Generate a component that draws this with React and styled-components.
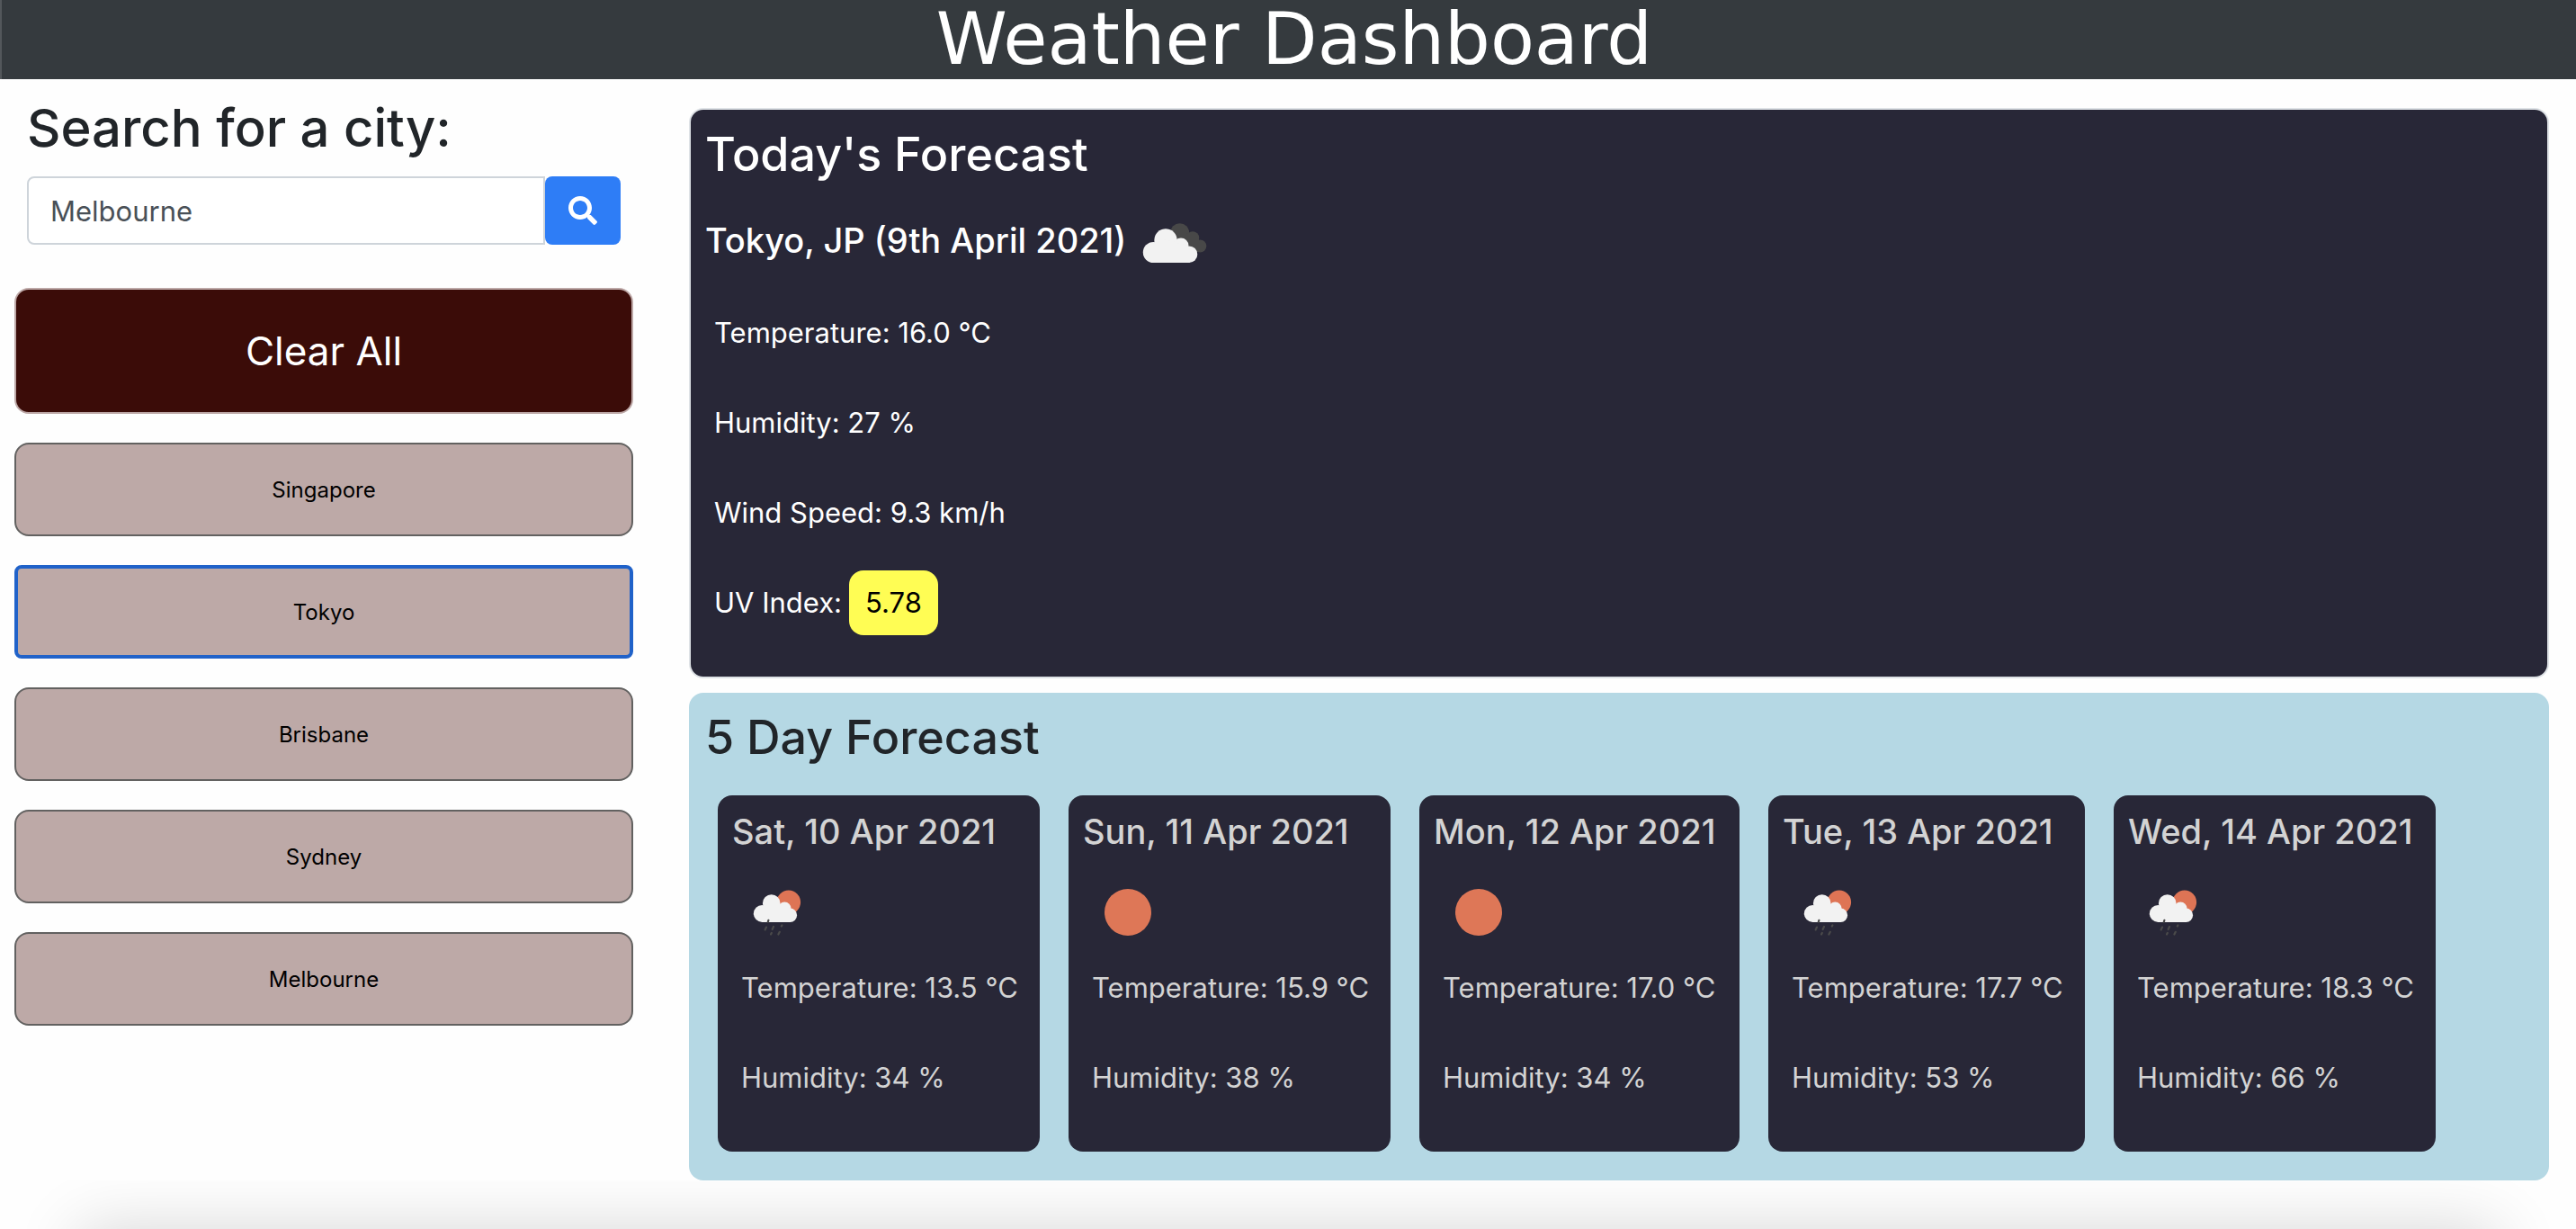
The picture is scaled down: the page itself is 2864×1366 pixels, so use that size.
import React, { useState } from "react";
import styled, { createGlobalStyle } from "styled-components";
import { FaSearch } from "react-icons/fa";

const GlobalStyle = createGlobalStyle`
  *, *::before, *::after { box-sizing: border-box; }
  body {
    margin: 0;
    background: #fefefe;
    color: #212529;
    font-family: Inter, "Liberation Sans", sans-serif;
  }
  button, input { font-family: inherit; }
`;

const Page = styled.div`
  display: flex;
  flex-direction: column;
  min-height: 100vh;
`;

const Header = styled.header`
  height: 88px;
  padding-left: 12px;
  background: #353a3e;
  border-left: 2px solid #53575b;
`;

const SiteTitle = styled.h1`
  margin: 0;
  color: #ffffff;
  font-family: Verdana, "DejaVu Sans", sans-serif;
  font-size: 80px;
  font-weight: 400;
  line-height: 88px;
  text-align: center;
`;

const Columns = styled.div`
  display: grid;
  grid-template-columns: minmax(0, 1fr) minmax(0, 3fr);
  flex: 1;
`;

const Sidebar = styled.aside`
  padding: 16px 12px 0 16px;
`;

const SearchForm = styled.form`
  padding: 0 14px;
`;

const SearchLabel = styled.label`
  display: block;
  margin-bottom: 16px;
  font-size: 58px;
  font-weight: 500;
  line-height: 76px;
`;

const SearchGroup = styled.div`
  display: flex;
  height: 76px;
`;

const SearchInput = styled.input`
  flex: 1;
  min-width: 0;
  padding: 0 24px;
  border: 2px solid #ced4da;
  border-radius: 8px 0 0 8px;
  background: #ffffff;
  color: #495057;
  font-size: 31px;
  outline: none;
`;

const SearchButton = styled.button`
  display: flex;
  align-items: center;
  justify-content: center;
  width: 84px;
  border: 0;
  border-radius: 8px;
  background: #2e7df6;
  color: #ffffff;
  font-size: 32px;
`;

const CityList = styled.div`
  display: flex;
  flex-direction: column;
  gap: 32px;
  margin-top: 48px;
`;

const ClearButton = styled.button`
  height: 140px;
  border: 2px solid #bda8a7;
  border-radius: 16px;
  background: #3b0c08;
  color: #ffffff;
  font-size: 44px;
`;

const CityButton = styled.button`
  height: 104px;
  border: ${(p) => (p.$active ? "4px solid #2062c9" : "2px solid #626160")};
  border-radius: ${(p) => (p.$active ? "8px" : "16px")};
  background: #bda9a7;
  color: #000000;
  font-size: 24px;
`;

const Content = styled.main`
  display: flex;
  flex-direction: column;
  gap: 16px;
  padding: 32px 30px 0 50px;
`;

const TodayPanel = styled.section`
  padding: 16px 16px 32px;
  border: 2px solid #dee2e6;
  border-radius: 16px;
  background: #282737;
  color: #ffffff;
`;

const ForecastPanel = styled.section`
  padding: 16px 18px 32px;
  border-radius: 16px;
  background: #b5d8e4;
`;

const PanelTitle = styled.h2`
  margin: 0;
  font-size: 52px;
  font-weight: 500;
  line-height: 68px;
`;

const CityRow = styled.div`
  display: flex;
  align-items: center;
  gap: 4px;
  margin: 12px 0 4px;
`;

const CityName = styled.h3`
  margin: 0;
  font-size: 38px;
  font-weight: 500;
  line-height: 48px;
`;

const Readings = styled.ul`
  margin: 0;
  padding: 0 0 0 10px;
  list-style: none;
  font-size: 31px;
  line-height: 48px;
`;

const Reading = styled.li`
  display: flex;
  align-items: center;
  gap: 8px;
  height: 100px;
  white-space: nowrap;
`;

const UvBadge = styled.span`
  padding: 12px 18px;
  border-radius: 16px;
  background: #fffd54;
  color: #000000;
`;

const DayGrid = styled.div`
  display: grid;
  grid-template-columns: 358fr 358fr 356fr 352fr 358fr;
  gap: 32px;
  padding: 30px 108px 0 14px;
`;

const DayCard = styled.article`
  min-width: 0;
  padding: 16px 16px 32px;
  border-radius: 16px;
  background: #282737;
  color: #d3d3d3;
`;

const DayTitle = styled.h3`
  margin: 0 0 16px;
  font-size: 38px;
  font-weight: 500;
  line-height: 48px;
  white-space: nowrap;
`;

const DayIcon = styled.svg`
  display: block;
  width: 100px;
  height: 84px;
`;

const TodayIcon = styled.svg`
  display: block;
  width: 100px;
  height: 98px;
`;

const BottomShade = styled.footer`
  height: 54px;
  padding-top: 54px;
  overflow: hidden;

  &::after {
    content: "";
    display: block;
    height: 100px;
    margin: 0 88px;
    box-shadow: 0 0 72px rgba(0, 0, 0, 0.16);
  }
`;

function BrokenClouds() {
  return (
    <TodayIcon viewBox="0 0 100 98" role="img" aria-label="Broken clouds">
      <g fill="#484848">
        <circle cx="55.7" cy="40.7" r="10.5" />
        <circle cx="70" cy="46.4" r="7.2" />
        <circle cx="78.3" cy="55.5" r="7" />
        <path d="M52 42L72 42L84 58L78 62L66 62Z" />
      </g>
      <g fill="#f2f2f2">
        <circle cx="40" cy="49" r="12.7" />
        <circle cx="26.4" cy="62.5" r="11.6" />
        <circle cx="57" cy="55" r="8.5" />
        <circle cx="66" cy="64.7" r="9.3" />
        <path d="M26 54L40 48L60 54L67 74L26 74Z" />
      </g>
    </TodayIcon>
  );
}

function SunRain() {
  return (
    <DayIcon viewBox="0 0 100 84" role="img" aria-label="Sun and rain">
      <circle cx="62.8" cy="38.8" r="13.3" fill="#de7455" />
      <g fill="#f2f2f2">
        <circle cx="43.7" cy="40" r="9.8" />
        <circle cx="33.3" cy="51.4" r="9.5" />
        <circle cx="58.3" cy="45.8" r="7.3" />
        <circle cx="64.4" cy="53.3" r="7.7" />
        <path d="M33 44L44 40L60 46L65 61L33 61Z" />
      </g>
      <g stroke="#4a4a4a" strokeWidth="2.2" strokeLinecap="round">
        <path d="M40.4 58.8L39.8 60.8" />
        <path d="M55.4 64.4L54.8 65.6" />
        <path d="M38 66.6L36.6 69.4" />
        <path d="M46 66L44.6 69" />
        <path d="M43.8 73L43 74.6" />
        <path d="M52.8 71.8L51.4 74.6" />
      </g>
    </DayIcon>
  );
}

function ClearSky() {
  return (
    <DayIcon viewBox="0 0 100 84" role="img" aria-label="Clear sky">
      <circle cx="50" cy="50" r="26" fill="#de7757" />
    </DayIcon>
  );
}

const cities = ["Singapore", "Tokyo", "Brisbane", "Sydney", "Melbourne"];

const days = [
  { date: "Sat, 10 Apr 2021", Icon: SunRain, temp: "13.5", humidity: 34 },
  { date: "Sun, 11 Apr 2021", Icon: ClearSky, temp: "15.9", humidity: 38 },
  { date: "Mon, 12 Apr 2021", Icon: ClearSky, temp: "17.0", humidity: 34 },
  { date: "Tue, 13 Apr 2021", Icon: SunRain, temp: "17.7", humidity: 53 },
  { date: "Wed, 14 Apr 2021", Icon: SunRain, temp: "18.3", humidity: 66 },
];

export default function App() {
  const [query, setQuery] = useState("Melbourne");
  const [active, setActive] = useState("Tokyo");

  return (
    <Page>
      <GlobalStyle />
      <Header>
        <SiteTitle>Weather Dashboard</SiteTitle>
      </Header>
      <Columns>
        <Sidebar>
          <SearchForm onSubmit={(e) => e.preventDefault()}>
            <SearchLabel htmlFor="city">Search for a city:</SearchLabel>
            <SearchGroup>
              <SearchInput
                id="city"
                type="text"
                value={query}
                onChange={(e) => setQuery(e.target.value)}
              />
              <SearchButton type="submit" aria-label="Search">
                <FaSearch />
              </SearchButton>
            </SearchGroup>
          </SearchForm>
          <CityList>
            <ClearButton type="button">Clear All</ClearButton>
            {cities.map((city) => (
              <CityButton
                key={city}
                type="button"
                $active={city === active}
                onClick={() => setActive(city)}
              >
                {city}
              </CityButton>
            ))}
          </CityList>
        </Sidebar>
        <Content>
          <TodayPanel>
            <PanelTitle>Today's Forecast</PanelTitle>
            <CityRow>
              <CityName>Tokyo, JP (9th April 2021)</CityName>
              <BrokenClouds />
            </CityRow>
            <Readings>
              <Reading>Temperature: 16.0 °C</Reading>
              <Reading>Humidity: 27 %</Reading>
              <Reading>Wind Speed: 9.3 km/h</Reading>
              <Reading>
                UV Index: <UvBadge>5.78</UvBadge>
              </Reading>
            </Readings>
          </TodayPanel>
          <ForecastPanel>
            <PanelTitle>5 Day Forecast</PanelTitle>
            <DayGrid>
              {days.map(({ date, Icon, temp, humidity }) => (
                <DayCard key={date}>
                  <DayTitle>{date}</DayTitle>
                  <Icon />
                  <Readings>
                    <Reading>Temperature: {temp} °C</Reading>
                    <Reading>Humidity: {humidity} %</Reading>
                  </Readings>
                </DayCard>
              ))}
            </DayGrid>
          </ForecastPanel>
        </Content>
      </Columns>
      <BottomShade />
    </Page>
  );
}
